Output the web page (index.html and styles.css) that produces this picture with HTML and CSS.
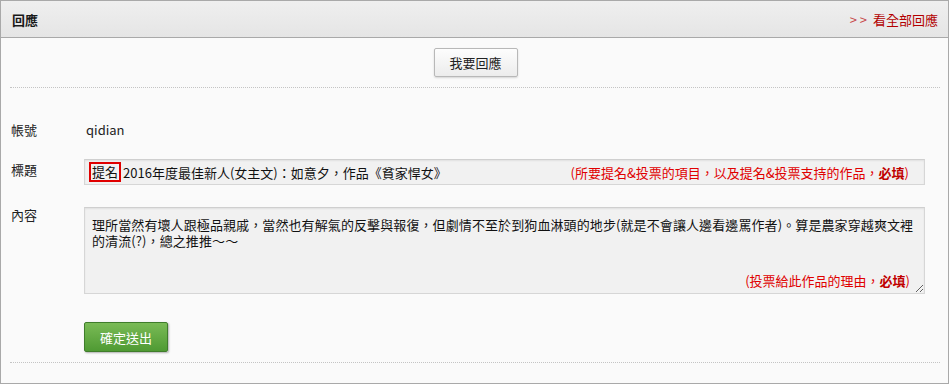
FILE: index.html
```html
<!DOCTYPE html>
<html lang="zh-Hant">
<head>
<meta charset="utf-8">
<title>回應</title>
<link rel="stylesheet" href="styles.css">
</head>
<body>
<div class="panel">
  <div class="panel-head">
    <span class="panel-title">回應</span>
    <a class="all-link" href="#"><span class="arrows">&gt; &gt;</span>看全部回應</a>
  </div>
  <div class="panel-body">
    <div class="reply-bar">
      <button class="btn-reply" type="button">我要回應</button>
    </div>
    <form class="reply-form">
      <div class="row row-account">
        <div class="label">帳號</div>
        <div class="value">qidian</div>
      </div>
      <div class="row row-title">
        <div class="label">標題</div>
        <div class="field field-input">
          <span class="tag">提名</span><span class="title-text">2016年度最佳新人(女主文)：如意夕，作品《貧家悍女》</span>
          <span class="hint">(所要提名&amp;投票的項目，以及提名&amp;投票支持的作品，<b>必填</b>)</span>
        </div>
      </div>
      <div class="row row-content">
        <div class="label">內容</div>
        <div class="area-wrap">
          <textarea class="field-area">理所當然有壞人跟極品親戚，當然也有解氣的反擊與報復，但劇情不至於到狗血淋頭的地步(就是不會讓人邊看邊罵作者)。算是農家穿越爽文裡
的清流(?)，總之推推～～</textarea>
          <span class="hint hint-area">(投票給此作品的理由，<b>必填</b>)</span>
        </div>
      </div>
      <div class="row row-submit">
        <div class="label"></div>
        <button class="btn-submit" type="button">確定送出</button>
      </div>
    </form>
  </div>
</div>
</body>
</html>
```
FILE: styles.css
```css
* { box-sizing: border-box; }
html, body { margin: 0; padding: 0; background: #fff; }
body {
  font-family: "Noto Sans CJK TC", "Liberation Sans", sans-serif;
  font-size: 13px;
  color: #222;
}
.panel {
  width: 949px;
  height: 384px;
  border: 1px solid #a9a9a9;
  background: #fafafa;
  display: flex;
  flex-direction: column;
}
.panel-head {
  height: 37px;
  border-bottom: 1px solid #a9a9a9;
  background: linear-gradient(#efefef, #e5e5e5);
  display: flex;
  align-items: center;
  justify-content: space-between;
  padding: 0 10px 0 11px;
}
.panel-title {
  font-weight: bold;
  color: #1a1a1a;
  font-size: 13px;
}
.all-link {
  color: #b30000;
  text-decoration: none;
  font-size: 13px;
}
.all-link .arrows { color: #c84848; margin-right: 6px; }
.panel-body {
  padding: 0 8px 0 9px;
  flex: 1;
  display: flex;
  flex-direction: column;
}
.reply-bar {
  display: flex;
  justify-content: center;
  padding: 10px 0 10px;
  border-bottom: 1px dotted #c4c4c4;
}
.btn-reply {
  width: 84px;
  height: 29px;
  border: 1px solid #b8b8b8;
  border-radius: 2px;
  background: linear-gradient(#fdfdfd, #ececec);
  box-shadow: 0 1px 2px rgba(0,0,0,0.15);
  font-family: inherit;
  font-size: 13px;
  color: #222;
  padding: 0;
  margin-left: 1px;
}
.reply-form {
  display: flex;
  flex-direction: column;
  padding-top: 32px;
  padding-bottom: 10px;
  border-bottom: 1px dotted #c4c4c4;
}
.row {
  display: flex;
  align-items: flex-start;
}
.label {
  width: 74px;
  flex: none;
  line-height: 20px;
  padding-left: 1px;
}
.value { line-height: 20px; padding-left: 2px; }
.row-title { margin-top: 19px; }
.row-title .label { padding-top: 1px; }
.field-input {
  position: relative;
  width: 841px;
  height: 26px;
  border: 1px solid #d6d6d6;
  border-top-color: #cfcfcf;
  background: #f1f1f1;
  box-shadow: inset 0 1px 2px rgba(0,0,0,0.07);
  display: flex;
  align-items: center;
  padding-left: 4px;
  color: #111;
}
.tag {
  border: 2px solid #e00000;
  height: 20px;
  line-height: 16px;
  padding: 0 1px;
  margin-right: 2px;
}
.hint {
  position: absolute;
  right: 15px;
  color: #e00000;
  white-space: nowrap;
}
.hint b { color: #c00000; }
.row-content { margin-top: 22px; }
.row-content .label { margin-top: -2px; }
.area-wrap { position: relative; }
.field-area {
  display: block;
  width: 841px;
  height: 87px;
  border: 1px solid #d6d6d6;
  border-top-color: #cfcfcf;
  background: #f1f1f1;
  box-shadow: inset 0 1px 2px rgba(0,0,0,0.07);
  font-family: inherit;
  font-size: 13px;
  line-height: 16px;
  letter-spacing: 0.1px;
  color: #111;
  padding: 9px 6px 0 7px;
  margin: 0;
  overflow: hidden;
}
.hint-area { bottom: 4px; }
.row-submit { margin-top: 28px; }
.btn-submit {
  width: 84px;
  height: 30px;
  border: 1px solid #3f7d2b;
  border-radius: 2px;
  background: linear-gradient(#7abb56, #4f9a33);
  box-shadow: 1px 1px 2px rgba(0,0,0,0.3);
  color: #fff;
  font-family: inherit;
  font-size: 13px;
  padding: 0;
}
```
